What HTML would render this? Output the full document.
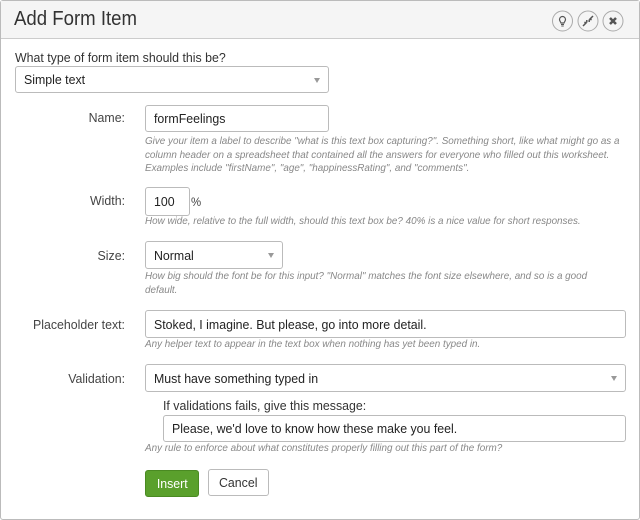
<!DOCTYPE html>
<html><head><style>
*{box-sizing:border-box;margin:0;padding:0}
body{width:640px;height:520px;background:#fff;font-family:"Liberation Sans",sans-serif;color:#333;position:relative;overflow:hidden}
.frame{position:absolute;left:0;top:0;width:640px;height:520px;border:1px solid #bbb;border-radius:3px}
.hdr{position:absolute;left:1px;top:1px;width:638px;height:38px;background:#f5f5f5;border-bottom:1px solid #ccc}
.title{position:absolute;left:14px;top:8px;font-size:20px;color:#333;transform:scaleX(.93);transform-origin:left center;white-space:nowrap}
.a{position:absolute}
.n{display:inline-block;transform:scaleX(.95);transform-origin:left center;white-space:nowrap}
.lbl{position:absolute;font-size:13px;color:#444;text-align:right;width:120px;left:5px;transform:scaleX(.95);transform-origin:right center;white-space:nowrap}
.box{position:absolute;border:1px solid #bbb;border-radius:3px;background:#fff;font-size:13px;color:#222;padding-left:8px;display:flex;align-items:center}
.help{position:absolute;left:145px;font-size:10.4px;font-style:italic;color:#888;line-height:13.5px;white-space:nowrap;transform:scaleX(.95);transform-origin:left top}
.arr{position:absolute;right:8px;top:50%;margin-top:-2px;width:0;height:0;border-left:3.5px solid transparent;border-right:3.5px solid transparent;border-top:5px solid #999}
</style></head><body>
<div class="frame"></div>
<div class="hdr"></div>
<div class="title">Add Form Item</div>
<svg class="a" style="left:548px;top:8px" width="80" height="26" viewBox="0 0 80 26">
<g fill="none" stroke="#aaa" stroke-width="1"><circle cx="14.5" cy="13" r="10"/><circle cx="40" cy="13" r="10"/><circle cx="65" cy="13" r="10"/></g>
<path d="M11.5 11.5a3 3 0 1 1 6 0c0 1.5-1.2 2.3-1.5 3.5h-3c-.3-1.2-1.5-2-1.5-3.5z" fill="none" stroke="#555" stroke-width="1.2"/>
<path d="M13 16.5h3M13.3 18h2.4" stroke="#555" stroke-width="1"/>
<path d="M35 18l3.5-3.5M38.8 14.5v-2.5M38.8 14.5h-2.5M45 8l-3.5 3.5M41.2 11.5v2.5M41.2 11.5h2.5" stroke="#555" stroke-width="1.5" fill="none"/>
<path d="M62 10l6 6M68 10l-6 6" stroke="#555" stroke-width="2.5"/>
</svg>
<div class="a" style="left:15px;top:50px;font-size:13px;color:#333"><span class="n">What type of form item should this be?</span></div>
<div class="box" style="left:15px;top:66px;width:314px;height:27px"><span class="n">Simple text</span><span class="arr"></span></div>

<div class="lbl" style="top:110px">Name:</div>
<div class="box" style="left:145px;top:105px;width:184px;height:27px"><span class="n">formFeelings</span></div>
<div class="help" style="top:135px">Give your item a label to describe "what is this text box capturing?". Something short, like what might go as a<br>column header on a spreadsheet that contained all the answers for everyone who filled out this worksheet.<br>Examples include "firstName", "age", "happinessRating", and "comments".</div>

<div class="lbl" style="top:193px">Width:</div>
<div class="box" style="left:145px;top:187px;width:45px;height:29px"><span class="n">100</span></div>
<div class="a" style="left:191px;top:195px;font-size:12px;color:#444"><span class="n">%</span></div>
<div class="help" style="top:215px">How wide, relative to the full width, should this text box be? 40% is a nice value for short responses.</div>

<div class="lbl" style="top:248px">Size:</div>
<div class="box" style="left:145px;top:241px;width:138px;height:28px"><span class="n">Normal</span><span class="arr"></span></div>
<div class="help" style="top:270px">How big should the font be for this input? "Normal" matches the font size elsewhere, and so is a good<br>default.</div>

<div class="lbl" style="top:317px">Placeholder text:</div>
<div class="box" style="left:145px;top:310px;width:481px;height:28px"><span class="n">Stoked, I imagine. But please, go into more detail.</span></div>
<div class="help" style="top:338px">Any helper text to appear in the text box when nothing has yet been typed in.</div>

<div class="lbl" style="top:371px">Validation:</div>
<div class="box" style="left:145px;top:364px;width:481px;height:28px"><span class="n">Must have something typed in</span><span class="arr"></span></div>
<div class="a" style="left:163px;top:398px;font-size:13px;color:#333"><span class="n">If validations fails, give this message:</span></div>
<div class="box" style="left:163px;top:415px;width:463px;height:27px"><span class="n">Please, we'd love to know how these make you feel.</span></div>
<div class="help" style="top:442px">Any rule to enforce about what constitutes properly filling out this part of the form?</div>

<div class="a" style="left:145px;top:470px;width:54px;height:27px;background:#5aa02c;border:1px solid #4a8a22;border-radius:3px;color:#fff;font-size:13px;display:flex;align-items:center;justify-content:center"><span style="display:inline-block;transform:scaleX(.95)">Insert</span></div>
<div class="a" style="left:208px;top:469px;width:61px;height:27px;background:#fff;border:1px solid #bbb;border-radius:3px;color:#333;font-size:13px;display:flex;align-items:center;justify-content:center"><span style="display:inline-block;transform:scaleX(.95)">Cancel</span></div>
</body></html>
